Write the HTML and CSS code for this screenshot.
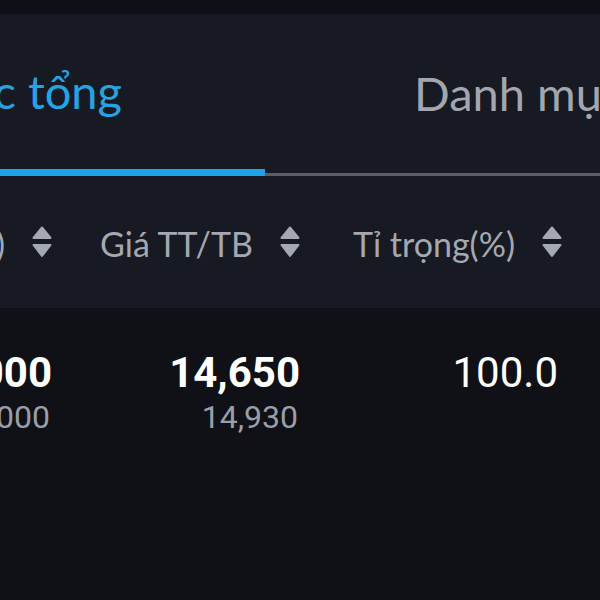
FILE: index.html
```html
<!DOCTYPE html>
<html lang="vi">
<head>
    <meta charset="UTF-8">
    <meta name="viewport" content="width=device-width, initial-scale=1.0">
    <title>Danh mục</title>
    <link rel="stylesheet" href="styles.css">
</head>
<body>
    <div class="screen">
        <div class="status-bar"></div>

        <div class="tabs">
            <div class="tab tab-active"><span>Danh mục tổng</span></div>
            <div class="tab"><span>Danh mục chi tiết</span></div>
        </div>

        <div class="grid thead">
            <div class="cell">
                <span>Giá trị (x1000)</span>
                <svg class="sort" viewBox="0 0 20 32"><path d="M10 1.5 L18.5 12 H1.5 Z"/><path d="M1.5 19 H18.5 L10 30 Z"/></svg>
            </div>
            <div class="cell">
                <span>Giá TT/TB</span>
                <svg class="sort" viewBox="0 0 20 32"><path d="M10 1.5 L18.5 12 H1.5 Z"/><path d="M1.5 19 H18.5 L10 30 Z"/></svg>
            </div>
            <div class="cell">
                <span>Tỉ trọng(%)</span>
                <svg class="sort" viewBox="0 0 20 32"><path d="M10 1.5 L18.5 12 H1.5 Z"/><path d="M1.5 19 H18.5 L10 30 Z"/></svg>
            </div>
        </div>

        <div class="grid row">
            <div class="num">
                <div class="main">1,465,000</div>
                <div class="sub">1,493,000</div>
            </div>
            <div class="num">
                <div class="main">14,650</div>
                <div class="sub">14,930</div>
            </div>
            <div class="num">
                <div class="main light">100.0</div>
            </div>
        </div>
    </div>
</body>
</html>
```

FILE: styles.css
```css
html, body {
    margin: 0;
    padding: 0;
    background-color: #101116;
    overflow: hidden;
}

.screen {
    width: 600px;
    height: 600px;
    overflow: hidden;
    background-color: #101116;
}

.status-bar {
    height: 14px;
    background-color: #0e0f17;
}

.tabs {
    display: flex;
    height: 162px;
    background-color: #171a22;
    border-bottom: 3px solid #5b5e65;
    box-sizing: border-box;
    font-family: Lato, "Noto Sans", sans-serif;
    font-size: 47px;
    color: #a3a6ae;
}

.tab {
    display: flex;
    align-items: center;
    flex: 0 0 auto;
    white-space: nowrap;
    padding-bottom: 2px;
}

.tab-active {
    width: 265px;
    justify-content: flex-end;
    padding-right: 143px;
    box-sizing: border-box;
    color: #27a3e3;
    border-bottom: 7px solid #1ea4e6;
    margin-bottom: -3px;
}

.tab:not(.tab-active) {
    padding-left: 149px;
}

.grid {
    display: grid;
    grid-template-columns: 52px 248px 262px;
}

.thead {
    height: 132px;
    background-color: #171a22;
    font-family: Lato, "Noto Sans", sans-serif;
    font-size: 34px;
    color: #a5a8b1;
}

.cell {
    display: flex;
    align-items: center;
    justify-content: flex-end;
    gap: 27px;
    white-space: nowrap;
    padding-top: 3px;
}

.sort {
    width: 20px;
    height: 32px;
    flex: 0 0 auto;
    margin-top: -3px;
    fill: #a5a8b1;
    stroke: #a5a8b1;
    stroke-width: 2;
    stroke-linejoin: round;
}

.row {
    padding-top: 41px;
    font-family: Roboto, "Noto Sans", sans-serif;
    color: #ffffff;
}

.num {
    display: flex;
    flex-direction: column;
    align-items: flex-end;
    white-space: nowrap;
}

.main {
    font-size: 42px;
    font-weight: 700;
    line-height: 48px;
}

.main.light {
    font-weight: 400;
    margin-right: 4px;
}

.sub {
    font-size: 32px;
    line-height: 40px;
    margin-right: 2px;
    color: #9a9ea6;
}
```
